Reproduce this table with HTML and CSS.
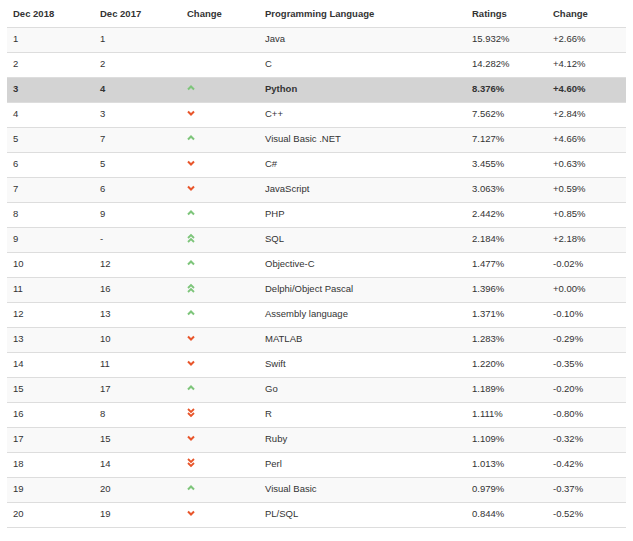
FILE: index.html
```html
<!DOCTYPE html>
<html>
<head>
<meta charset="utf-8">
<link rel="stylesheet" href="styles.css">
</head>
<body>
<svg width="0" height="0" class="defs">
  <defs>
    <symbol id="up" viewBox="0 0 8 10"><polyline points="1,6.5 4,3.5 7,6.5" fill="none" stroke="#7dc57a" stroke-width="2"/></symbol>
    <symbol id="down" viewBox="0 0 8 10"><polyline points="1,3.5 4,6.5 7,3.5" fill="none" stroke="#e8552a" stroke-width="2"/></symbol>
    <symbol id="up2" viewBox="0 0 8 10"><polyline points="1,5 4,2 7,5" fill="none" stroke="#7dc57a" stroke-width="1.8"/><polyline points="1,9 4,6 7,9" fill="none" stroke="#7dc57a" stroke-width="1.8"/></symbol>
    <symbol id="down2" viewBox="0 0 8 10"><polyline points="1,1 4,4 7,1" fill="none" stroke="#e8552a" stroke-width="1.8"/><polyline points="1,5 4,8 7,5" fill="none" stroke="#e8552a" stroke-width="1.8"/></symbol>
  </defs>
</svg>
<table class="tiobe">
  <colgroup>
    <col class="c1"><col class="c2"><col class="c3"><col class="c4"><col class="c5"><col class="c6">
  </colgroup>
  <thead>
    <tr><th>Dec 2018</th><th>Dec 2017</th><th>Change</th><th>Programming Language</th><th>Ratings</th><th>Change</th></tr>
  </thead>
  <tbody>
    <tr><td>1</td><td>1</td><td></td><td>Java</td><td>15.932%</td><td>+2.66%</td></tr>
    <tr><td>2</td><td>2</td><td></td><td>C</td><td>14.282%</td><td>+4.12%</td></tr>
    <tr class="hl"><td>3</td><td>4</td><td><svg class="ic"><use href="#up"/></svg></td><td>Python</td><td>8.376%</td><td>+4.60%</td></tr>
    <tr><td>4</td><td>3</td><td><svg class="ic"><use href="#down"/></svg></td><td>C++</td><td>7.562%</td><td>+2.84%</td></tr>
    <tr><td>5</td><td>7</td><td><svg class="ic"><use href="#up"/></svg></td><td>Visual Basic .NET</td><td>7.127%</td><td>+4.66%</td></tr>
    <tr><td>6</td><td>5</td><td><svg class="ic"><use href="#down"/></svg></td><td>C#</td><td>3.455%</td><td>+0.63%</td></tr>
    <tr><td>7</td><td>6</td><td><svg class="ic"><use href="#down"/></svg></td><td>JavaScript</td><td>3.063%</td><td>+0.59%</td></tr>
    <tr><td>8</td><td>9</td><td><svg class="ic"><use href="#up"/></svg></td><td>PHP</td><td>2.442%</td><td>+0.85%</td></tr>
    <tr><td>9</td><td>-</td><td><svg class="ic"><use href="#up2"/></svg></td><td>SQL</td><td>2.184%</td><td>+2.18%</td></tr>
    <tr><td>10</td><td>12</td><td><svg class="ic"><use href="#up"/></svg></td><td>Objective-C</td><td>1.477%</td><td>-0.02%</td></tr>
    <tr><td>11</td><td>16</td><td><svg class="ic"><use href="#up2"/></svg></td><td>Delphi/Object Pascal</td><td>1.396%</td><td>+0.00%</td></tr>
    <tr><td>12</td><td>13</td><td><svg class="ic"><use href="#up"/></svg></td><td>Assembly language</td><td>1.371%</td><td>-0.10%</td></tr>
    <tr><td>13</td><td>10</td><td><svg class="ic"><use href="#down"/></svg></td><td>MATLAB</td><td>1.283%</td><td>-0.29%</td></tr>
    <tr><td>14</td><td>11</td><td><svg class="ic"><use href="#down"/></svg></td><td>Swift</td><td>1.220%</td><td>-0.35%</td></tr>
    <tr><td>15</td><td>17</td><td><svg class="ic"><use href="#up"/></svg></td><td>Go</td><td>1.189%</td><td>-0.20%</td></tr>
    <tr><td>16</td><td>8</td><td><svg class="ic"><use href="#down2"/></svg></td><td>R</td><td>1.111%</td><td>-0.80%</td></tr>
    <tr><td>17</td><td>15</td><td><svg class="ic"><use href="#down"/></svg></td><td>Ruby</td><td>1.109%</td><td>-0.32%</td></tr>
    <tr><td>18</td><td>14</td><td><svg class="ic"><use href="#down2"/></svg></td><td>Perl</td><td>1.013%</td><td>-0.42%</td></tr>
    <tr><td>19</td><td>20</td><td><svg class="ic"><use href="#up"/></svg></td><td>Visual Basic</td><td>0.979%</td><td>-0.37%</td></tr>
    <tr><td>20</td><td>19</td><td><svg class="ic"><use href="#down"/></svg></td><td>PL/SQL</td><td>0.844%</td><td>-0.52%</td></tr>
  </tbody>
</table>
</body>
</html>
```
FILE: styles.css
```css
html, body {
  background: #fff;
}
body {
  margin: 3px 7px 0 7px;
  font-family: "Liberation Sans", Arial, sans-serif;
  font-size: 9.5px;
  color: #333;
}
.defs {
  position: absolute;
  width: 0;
  height: 0;
  overflow: hidden;
}
.tiobe {
  width: 619px;
  border-collapse: collapse;
  table-layout: fixed;
}
.c1 { width: 87px; }
.c2 { width: 87px; }
.c3 { width: 78px; }
.c4 { width: 207px; }
.c5 { width: 81px; }
.c6 { width: 79px; }
.tiobe th,
.tiobe td {
  height: 20px;
  padding: 0 0 4px 6px;
  text-align: left;
  vertical-align: middle;
  white-space: nowrap;
  border-bottom: 1px solid #dddddd;
}
.tiobe th {
  font-weight: bold;
  color: #333;
}
.tiobe tbody tr:nth-child(odd) td {
  background: #f9f9f9;
}
.tiobe tbody tr.hl td {
  background: #d3d3d3;
  font-weight: bold;
}
.ic {
  display: block;
  width: 8px;
  height: 10px;
}
```
